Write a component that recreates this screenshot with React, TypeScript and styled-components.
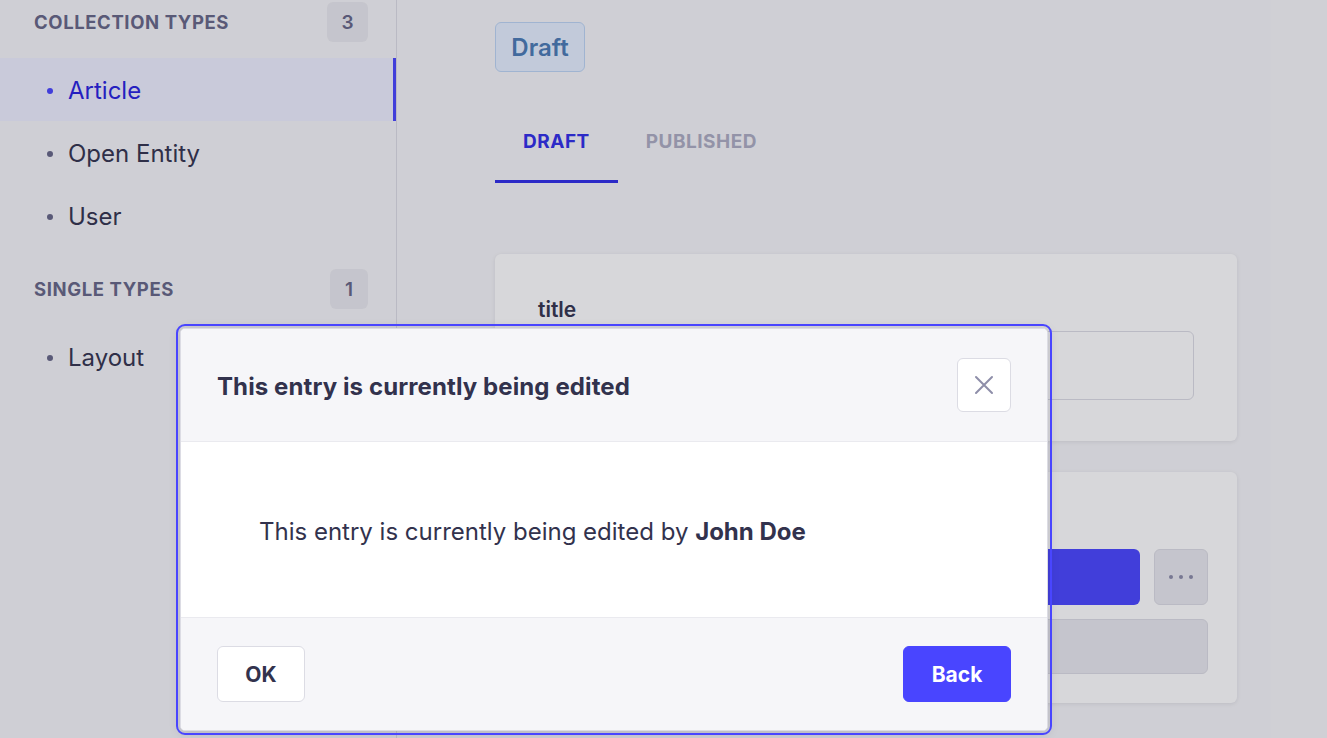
import React from "react";
import styled, { createGlobalStyle } from "styled-components";

const GlobalStyle = createGlobalStyle`
  html, body { margin: 0; padding: 0; }
  body {
    font-family: Inter, "Noto Sans", "Liberation Sans", sans-serif;
    overflow: hidden;
    -webkit-font-smoothing: antialiased;
  }
  * { box-sizing: border-box; }
`;

const Page = styled.div`
  position: relative;
  display: flex;
  width: 1327px;
  height: 738px;
  background: #f6f6f9;
  overflow: hidden;
`;

const Sidebar = styled.nav`
  width: 397px;
  flex: none;
  border-right: 1px solid #dcdce4;
  background: #f6f6f9;
  display: flex;
  flex-direction: column;
`;

const SectionHeader = styled.div<{ $mt: number }>`
  display: flex;
  align-items: center;
  justify-content: space-between;
  padding: 0 28px 0 34px;
  margin-top: ${(p) => p.$mt}px;
  margin-bottom: 16px;
  height: 40px;
`;

const SectionLabel = styled.span`
  font-size: 18.5px;
  font-weight: 700;
  letter-spacing: 0.6px;
  text-transform: uppercase;
  color: #666687;
`;

const CountBadge = styled.span<{ $w: number }>`
  display: flex;
  align-items: center;
  justify-content: center;
  width: ${(p) => p.$w}px;
  height: 40px;
  border-radius: 6px;
  background: #eaeaef;
  color: #666687;
  font-size: 19px;
  font-weight: 600;
`;

const NavItem = styled.div<{ $active?: boolean }>`
  display: flex;
  align-items: center;
  gap: 15px;
  height: 63px;
  padding-left: 47px;
  padding-top: 2px;
  font-size: 24px;
  color: ${(p) => (p.$active ? "#271fe0" : "#32324d")};
  background: ${(p) => (p.$active ? "#eeefff" : "transparent")};
  box-shadow: ${(p) => (p.$active ? "inset -3px 0 0 #4945ff" : "none")};
`;

const Bullet = styled.span<{ $active?: boolean }>`
  width: 6px;
  height: 6px;
  border-radius: 50%;
  background: ${(p) => (p.$active ? "#4945ff" : "#666687")};
  flex: none;
`;

const Main = styled.main`
  flex: 1;
  padding: 22px 90px 0 98px;
  display: flex;
  flex-direction: column;
`;

const StatusBadge = styled.div`
  align-self: flex-start;
  display: flex;
  align-items: center;
  justify-content: center;
  width: 90px;
  height: 50px;
  border-radius: 6px;
  background: #e6f0ff;
  border: 1px solid #bcd5f5;
  color: #4a7bb5;
  font-size: 24px;
  font-weight: 600;
`;

const Tabs = styled.div`
  display: flex;
  margin-top: 28px;
`;

const Tab = styled.div<{ $active?: boolean }>`
  display: flex;
  align-items: center;
  height: 83px;
  padding: 0 28px;
  font-size: 19px;
  font-weight: 700;
  letter-spacing: 0.5px;
  color: ${(p) => (p.$active ? "#2f2ce8" : "#adadc2")};
  box-shadow: ${(p) => (p.$active ? "inset 0 -3px 0 #2f2ce8" : "none")};
`;

const Card = styled.section<{ $pt: number; $px: number; $pb: number; $mt: number }>`
  margin-top: ${(p) => p.$mt}px;
  background: #ffffff;
  border-radius: 6px;
  box-shadow: 0 1px 4px rgba(33, 33, 52, 0.1);
  padding: ${(p) => `${p.$pt}px ${p.$px}px ${p.$pb}px`};
  display: flex;
  flex-direction: column;
`;

const FieldLabel = styled.label`
  font-size: 21px;
  font-weight: 600;
  color: #32324d;
  line-height: 24px;
`;

const TextInput = styled.div`
  margin-top: 9px;
  height: 69px;
  border: 1px solid #dcdce4;
  border-radius: 6px;
  background: #ffffff;
`;

const ButtonRow = styled.div`
  display: flex;
  gap: 14px;
`;

const PrimaryBlock = styled.div`
  flex: 1;
  height: 56px;
  border-radius: 6px;
  background: #4945ff;
`;

const MoreButton = styled.div`
  width: 54px;
  height: 56px;
  border-radius: 6px;
  background: #eaeaef;
  border: 1px solid #dcdce4;
  display: flex;
  align-items: center;
  justify-content: center;
`;

const SecondaryBlock = styled.div`
  margin-top: 14px;
  height: 55px;
  border-radius: 6px;
  background: #eaeaef;
  border: 1px solid #dcdce4;
`;

const Overlay = styled.div`
  position: absolute;
  inset: 0;
  background: rgba(33, 33, 52, 0.18);
`;

const Dialog = styled.div`
  position: absolute;
  left: 180px;
  top: 328px;
  width: 868px;
  height: 403px;
  background: #ffffff;
  border: 1px solid #dcdce4;
  border-radius: 5px;
  outline: 2px solid #4945ff;
  outline-offset: 2px;
  box-shadow: 0 2px 12px rgba(33, 33, 52, 0.15);
  display: flex;
  flex-direction: column;
  overflow: hidden;
`;

const DialogHeader = styled.header`
  height: 113px;
  flex: none;
  background: #f6f6f9;
  border-bottom: 1px solid #eaeaef;
  display: flex;
  align-items: center;
  justify-content: space-between;
  padding: 0 36px;
`;

const DialogTitle = styled.h2`
  margin: 2px 0 0;
  font-size: 24px;
  font-weight: 700;
  color: #32324d;
  letter-spacing: 0.1px;
`;

const CloseButton = styled.button`
  width: 54px;
  height: 54px;
  border: 1px solid #dcdce4;
  border-radius: 6px;
  background: #ffffff;
  display: flex;
  align-items: center;
  justify-content: center;
  padding: 0;
  cursor: pointer;
`;

const DialogBody = styled.div`
  flex: 1;
  display: flex;
  align-items: center;
  padding: 3px 0 0 78px;
  background: #ffffff;
`;

const BodyText = styled.p`
  margin: 0;
  font-size: 24px;
  color: #32324d;
  b { font-weight: 700; }
`;

const DialogFooter = styled.footer`
  height: 113px;
  flex: none;
  background: #f6f6f9;
  border-top: 1px solid #eaeaef;
  display: flex;
  align-items: center;
  justify-content: space-between;
  padding: 0 36px;
`;

const FooterButton = styled.button<{ $primary?: boolean; $w: number }>`
  width: ${(p) => p.$w}px;
  height: 56px;
  border-radius: 6px;
  border: 1px solid ${(p) => (p.$primary ? "#4945ff" : "#dcdce4")};
  background: ${(p) => (p.$primary ? "#4945ff" : "#ffffff")};
  color: ${(p) => (p.$primary ? "#ffffff" : "#32324d")};
  font-family: inherit;
  font-size: 21px;
  font-weight: 700;
  cursor: pointer;
`;

const CloseIcon = () => (
  <svg width="20" height="20" viewBox="0 0 20 20" fill="none">
    <path d="M2 2L18 18M18 2L2 18" stroke="#8e8ea9" strokeWidth="2" strokeLinecap="round" />
  </svg>
);

const DotsIcon = () => (
  <svg width="26" height="6" viewBox="0 0 26 6">
    <circle cx="3" cy="3" r="2" fill="#8b8ba8" />
    <circle cx="13" cy="3" r="2" fill="#8b8ba8" />
    <circle cx="23" cy="3" r="2" fill="#8b8ba8" />
  </svg>
);

export default function App() {
  return (
    <>
      <GlobalStyle />
      <Page>
        <Sidebar>
          <SectionHeader $mt={2}>
            <SectionLabel>Collection Types</SectionLabel>
            <CountBadge $w={41}>3</CountBadge>
          </SectionHeader>
          <NavItem $active>
            <Bullet $active />
            Article
          </NavItem>
          <NavItem>
            <Bullet />
            Open Entity
          </NavItem>
          <NavItem>
            <Bullet />
            User
          </NavItem>
          <SectionHeader $mt={22}>
            <SectionLabel>Single Types</SectionLabel>
            <CountBadge $w={38}>1</CountBadge>
          </SectionHeader>
          <NavItem>
            <Bullet />
            Layout
          </NavItem>
        </Sidebar>
        <Main>
          <StatusBadge>Draft</StatusBadge>
          <Tabs>
            <Tab $active>DRAFT</Tab>
            <Tab>PUBLISHED</Tab>
          </Tabs>
          <Card $mt={71} $pt={44} $px={43} $pb={41}>
            <FieldLabel>title</FieldLabel>
            <TextInput />
          </Card>
          <Card $mt={31} $pt={77} $px={29} $pb={29}>
            <ButtonRow>
              <PrimaryBlock />
              <MoreButton>
                <DotsIcon />
              </MoreButton>
            </ButtonRow>
            <SecondaryBlock />
          </Card>
        </Main>
        <Overlay />
        <Dialog role="dialog">
          <DialogHeader>
            <DialogTitle>This entry is currently being edited</DialogTitle>
            <CloseButton aria-label="Close">
              <CloseIcon />
            </CloseButton>
          </DialogHeader>
          <DialogBody>
            <BodyText>
              This entry is currently being edited by <b>John Doe</b>
            </BodyText>
          </DialogBody>
          <DialogFooter>
            <FooterButton $w={88}>OK</FooterButton>
            <FooterButton $w={108} $primary>
              Back
            </FooterButton>
          </DialogFooter>
        </Dialog>
      </Page>
    </>
  );
}
